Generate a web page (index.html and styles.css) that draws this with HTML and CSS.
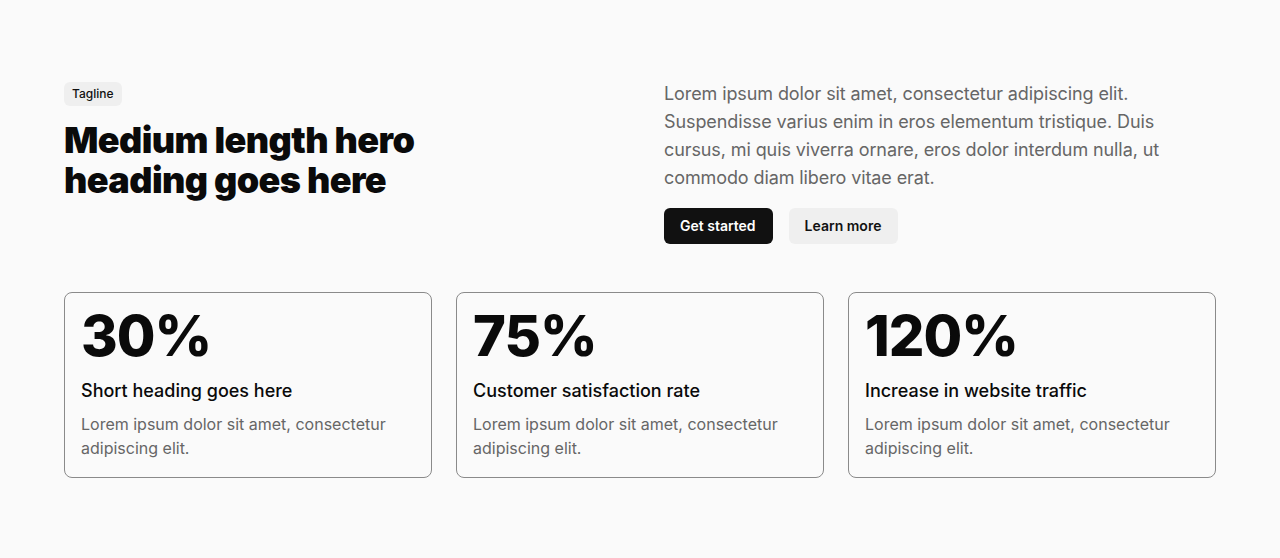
FILE: index.html
```html
<!DOCTYPE html>
<html lang="en">
<head>
<meta charset="utf-8">
<title>Stats</title>
<link rel="stylesheet" href="styles.css">
</head>
<body>
<section class="section">
  <div class="hero">
    <div class="hero-left">
      <span class="tagline">Tagline</span>
      <h1 class="title">Medium length hero heading goes here</h1>
    </div>
    <div class="hero-right">
      <p class="lead">Lorem ipsum dolor sit amet, consectetur adipiscing elit. Suspendisse varius enim in eros elementum tristique. Duis cursus, mi quis viverra ornare, eros dolor interdum nulla, ut commodo diam libero vitae erat.</p>
      <div class="actions">
        <a class="btn btn-dark" href="#">Get started</a>
        <a class="btn btn-light" href="#">Learn more</a>
      </div>
    </div>
  </div>
  <div class="stats">
    <div class="card">
      <div class="num">30%</div>
      <h3 class="card-title">Short heading goes here</h3>
      <p class="card-text">Lorem ipsum dolor sit amet, consectetur adipiscing elit.</p>
    </div>
    <div class="card">
      <div class="num">75%</div>
      <h3 class="card-title">Customer satisfaction rate</h3>
      <p class="card-text">Lorem ipsum dolor sit amet, consectetur adipiscing elit.</p>
    </div>
    <div class="card">
      <div class="num">120%</div>
      <h3 class="card-title">Increase in website traffic</h3>
      <p class="card-text">Lorem ipsum dolor sit amet, consectetur adipiscing elit.</p>
    </div>
  </div>
</section>
</body>
</html>
```
FILE: styles.css
```css
* { box-sizing: border-box; }
html, body { margin: 0; padding: 0; }
body {
  background: #fafafa;
  color: #0a0a0a;
  font-family: Inter, "Noto Sans", "Liberation Sans", sans-serif;
}
.section {
  padding: 80px 64px;
}
.hero {
  display: grid;
  grid-template-columns: 1fr 1fr;
  gap: 48px;
  margin-bottom: 48px;
}
.hero-left { display: flex; flex-direction: column; align-items: flex-start; }
.tagline {
  display: inline-block;
  margin-top: 2px;
  padding: 3px 8px;
  background: #efefef;
  border-radius: 6px;
  font-size: 12px;
  font-weight: 500;
  line-height: 18px;
  color: #111;
}
.title {
  margin: 14px 0 0;
  font-size: 36px;
  line-height: 40px;
  font-weight: 900;
  letter-spacing: -0.6px;
  max-width: 400px;
  color: #0a0a0a;
}
.lead {
  margin: 0;
  font-size: 18px;
  line-height: 28px;
  letter-spacing: -0.1px;
  color: #666;
}
.actions {
  display: flex;
  gap: 16px;
  margin-top: 16px;
}
.btn {
  display: inline-flex;
  align-items: center;
  height: 36px;
  padding: 0 17px 1px 16px;
  border-radius: 6px;
  font-size: 14px;
  font-weight: 600;
  text-decoration: none;
}
.btn-dark { background: #111; color: #fff; }
.btn-light { background: #efefef; color: #111; }
.stats {
  display: grid;
  grid-template-columns: repeat(3, 1fr);
  gap: 24px;
}
.card {
  border: 1px solid #8a8a8a;
  border-radius: 8px;
  padding: 11px 16px 17px;
}
.num {
  font-size: 56px;
  line-height: 64px;
  font-weight: 800;
  letter-spacing: -1px;
}
.card-title {
  margin: 10px 0 0;
  font-size: 18px;
  line-height: 26px;
  font-weight: 500;
}
.card-text {
  margin: 8px 0 0;
  font-size: 16px;
  line-height: 24px;
  color: #666;
}
```
